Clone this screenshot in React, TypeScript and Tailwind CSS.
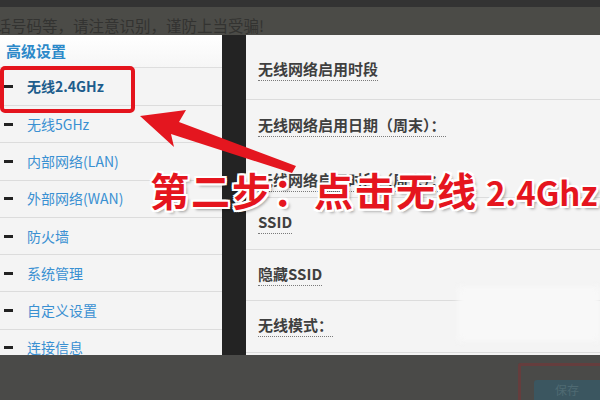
const menu = [
  { label: '无线5GHz' },
  { label: '内部网络(LAN)' },
  { label: '外部网络(WAN)' },
  { label: '防火墙' },
  { label: '系统管理' },
  { label: '自定义设置' },
  { label: '连接信息' },
]

const FONT = "font-['Noto_Sans_CJK_SC','Noto_Sans',sans-serif]"

function Label({ text }: { text: string }) {
  return (
    <span className="inline-block text-[15px] font-bold leading-[18px] text-[#3f3f3f] border-b border-dotted border-[#7a7a7a] pb-[2px]">
      {text}
    </span>
  )
}

export default function App() {
  return (
    <div className={`relative w-[600px] h-[400px] overflow-hidden bg-[#4a4a48] ${FONT}`}>
      {/* top strip */}
      <div className="h-[7px] bg-[#333333]" />
      {/* notice band */}
      <div className="h-[28px] bg-[#4b4b47] flex items-end pb-[1px] overflow-hidden">
        <span className="-ml-[20px] text-[15.5px] leading-[18px] text-[#333331] whitespace-nowrap">
          电话号码等，请注意识别，谨防上当受骗!
        </span>
      </div>

      {/* main */}
      <div className="flex h-[320px]">
        {/* left menu */}
        <div className="w-[222px] bg-[#f4f4f4] flex flex-col overflow-hidden">
          <div className="h-[33px] shrink-0 flex items-center pl-[6px] border-b border-[#dedede] bg-gradient-to-b from-white to-[#f6f6f6]">
            <span className="text-[15px] font-bold text-[#2c89c9]">高级设置</span>
          </div>
          <div className="h-[38px] shrink-0 flex items-center border-b border-[#dcdcdc]">
            <span className="ml-[4px] w-[9px] h-[3px] bg-[#222]" />
            <span className="ml-[14px] text-[14px] font-bold text-[#1d5d8c]">无线2.4GHz</span>
          </div>
          {menu.map((m) => (
            <div key={m.label} className="h-[37.3px] shrink-0 flex items-center border-b border-[#dcdcdc]">
              <span className="ml-[4px] w-[9px] h-[3px] bg-[#222]" />
              <span className="ml-[14px] text-[14px] text-[#3a90d2]">{m.label}</span>
            </div>
          ))}
        </div>

        {/* dark divider */}
        <div className="w-[24px] bg-[#232323]" />

        {/* right form */}
        <div className="flex-1 bg-[#f4f4f4] flex flex-col overflow-hidden">
          <div className="h-[65px] shrink-0 flex items-center pl-[12px] pt-[6px] border-b border-[#dcdcdc]">
            <Label text="无线网络启用时段" />
          </div>
          <div className="h-[98px] shrink-0 flex flex-col pl-[12px] pt-[12px] gap-[30px] border-b border-[#dcdcdc]">
            <div><Label text="无线网络启用日期（周末）：" /></div>
            <div><Label text="无线网络启用时段（周末）：" /></div>
          </div>
          <div className="h-[52px] shrink-0 flex items-center pl-[12px] border-b border-[#dcdcdc]">
            <Label text="SSID" />
          </div>
          <div className="h-[51px] shrink-0 flex items-center pl-[12px] border-b border-[#dcdcdc]">
            <Label text="隐藏SSID" />
          </div>
          <div className="h-[52px] shrink-0 flex items-center pl-[12px] border-b border-[#dcdcdc]">
            <Label text="无线模式：" />
          </div>
        </div>
      </div>

      {/* bottom bar */}
      <div className="h-[45px] flex justify-end">
        <div className="mt-[8px] w-[82px] h-[40px] border-[3px] border-r-0 border-[#653d3d] rounded-l-[3px] flex items-end justify-end">
          <div className="w-[66px] h-[20px] bg-[#3b5660] rounded-tl-[3px] flex items-center justify-center text-[12px] text-[#4f6a72]">
            保存
          </div>
        </div>
      </div>

      {/* faint erased patch */}
      <div className="absolute left-[458px] top-[287px] w-[142px] h-[54px] bg-[#f8f8f8] blur-[3px]" />

      {/* red highlight box */}
      <div className="absolute left-0 top-[66px] w-[135px] h-[47px] border-[4px] border-[#e4141d] rounded-[5px]" />

      {/* arrow */}
      <svg className="absolute left-0 top-0" width="600" height="400" viewBox="0 0 600 400">
        <polygon
          points="140,116 186,110 179,122 296,166 292,173 171,134 174,147"
          fill="#e4161f"
        />
      </svg>

      {/* annotation */}
      <div className="absolute left-[150px] top-[165px] whitespace-nowrap text-[39px] leading-[48px] font-bold tracking-[2px] text-[#e5151e] [text-shadow:2px_0_0_#fff,-2px_0_0_#fff,0_2px_0_#fff,0_-2px_0_#fff,2px_2px_0_#fff,-2px_-2px_0_#fff,2px_-2px_0_#fff,-2px_2px_0_#fff,3px_3px_3px_rgba(0,0,0,0.35)]">
        第二步：点击无线<span className="ml-[8px] text-[33px] tracking-normal">2.4Ghz</span>
      </div>
    </div>
  )
}
